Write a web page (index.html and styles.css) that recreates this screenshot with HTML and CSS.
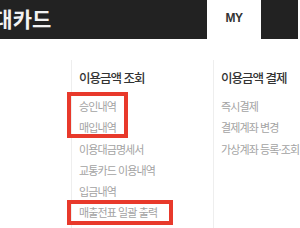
FILE: index.html
```html
<!DOCTYPE html>
<html lang="ko">
<head>
  <meta charset="UTF-8">
  <meta name="viewport" content="width=device-width, initial-scale=1.0">
  <title>현대카드 MY</title>
  <link rel="stylesheet" href="styles.css">
</head>
<body>
  <header class="topbar">
    <div class="logo"><span>현대카드</span></div>
    <div class="tab-my">MY</div>
    <div class="tab-dark"></div>
  </header>

  <div class="menu">
    <div class="col col-first">
      <h2>이용금액 조회</h2>
      <ul>
        <li>승인내역</li>
        <li>매입내역</li>
        <li>이용대금명세서</li>
        <li>교통카드 이용내역</li>
        <li>입금내역</li>
        <li>매출전표 일괄 출력</li>
      </ul>
    </div>
    <div class="col">
      <h2>이용금액 결제</h2>
      <ul>
        <li>즉시결제</li>
        <li>결제계좌 변경</li>
        <li>가상계좌 등록·조회</li>
      </ul>
    </div>
  </div>

  <!-- annotation boxes -->
  <div class="mark mark-1"></div>
  <div class="mark mark-2"></div>
</body>
</html>
```

FILE: styles.css
```css
body {
  margin: 0;
  width: 300px;
  height: 228px;
  overflow: hidden;
  position: relative;
  background: #fff;
  font-family: "Noto Sans CJK KR", "Noto Sans", sans-serif;
}

.topbar {
  display: flex;
  height: 39px;
}

.logo {
  width: 207px;
  background-color: #222;
  overflow: hidden;
  display: flex;
  align-items: center;
}

.logo span {
  margin-left: -26px;
  color: #f2f2f2;
  font-size: 21px;
  font-weight: bold;
  letter-spacing: 0;
  white-space: nowrap;
  line-height: 1;
  margin-top: -3px;
}

.tab-my {
  width: 54px;
  text-align: center;
  font-family: "Liberation Sans", Arial, sans-serif;
  font-weight: bold;
  font-size: 12px;
  letter-spacing: -0.5px;
  color: #333;
  line-height: 36px;
}

.tab-dark {
  width: 37px;
  background-color: #222;
}

.menu {
  display: flex;
  margin-top: 21px;
  padding-left: 71px;
}

.col {
  border-left: 1px solid #eee;
  padding-left: 7px;
  height: 168px;
}

.col-first {
  width: 134px;
}

.col h2 {
  margin: 0;
  padding-top: 8px;
  font-size: 12.5px;
  font-weight: 500;
  letter-spacing: -1px;
  line-height: 20px;
  color: #333;
}

.col ul {
  list-style: none;
  margin: 8px 0 0;
  padding: 0;
}

.col li {
  font-size: 11px;
  letter-spacing: -0.9px;
  line-height: 21.3px;
  color: #a3a3a3;
  white-space: nowrap;
}

.mark {
  position: absolute;
  border: 4px solid #e8392b;
  box-sizing: border-box;
}

.mark-1 {
  left: 67px;
  top: 92px;
  width: 61px;
  height: 46px;
}

.mark-2 {
  left: 67px;
  top: 200px;
  width: 106px;
  height: 25px;
}
```
